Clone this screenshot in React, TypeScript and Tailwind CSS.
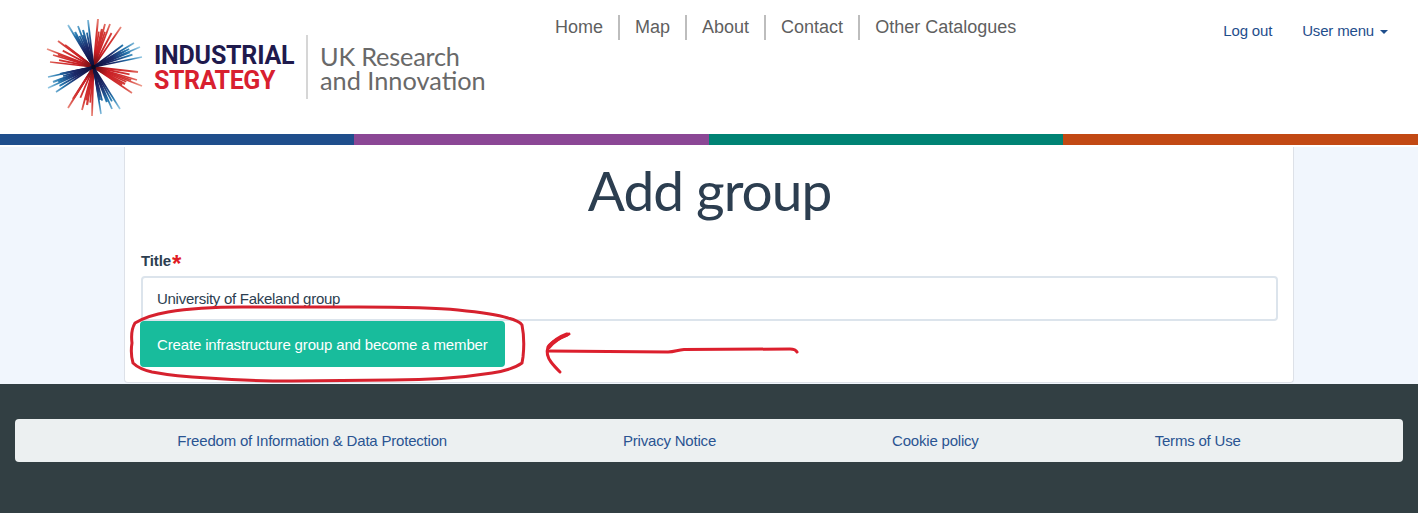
const sans = { fontFamily: '"Liberation Sans", Arial, sans-serif' };

type Ray = [number, number, number];
// sectors of the burst: tips in px relative to the burst box; third value = stroke width
const blue: Ray[][] = [
  [[28, 13, 1.8], [35, 20, 2.2], [38, 14, 1.8], [43, 18, 2], [48, 8, 1.8]],
  [[83, 33, 1.8], [90, 40, 2.2], [94, 31, 1.6], [100, 35, 1.6], [102, 45, 1.6]],
  [[80, 97, 1.6], [72, 97, 1.8], [67, 90, 2.2], [61, 102, 1.6], [60, 88, 2]],
  [[8, 65, 1.6], [20, 62, 2.2], [13, 70, 2.2], [8, 76, 1.6], [16, 80, 1.6]],
];
const red: Ray[][] = [
  [[58, 7, 2], [62, 17, 2.2], [65, 12, 1.8], [70, 12, 1.8], [81, 15, 1.8]],
  [[98, 60, 1.8], [97, 68, 1.8], [102, 74, 1.6], [85, 72, 2.2], [92, 81, 1.6]],
  [[28, 96, 1.8], [33, 87, 2.2], [42, 98, 1.8], [47, 93, 2.2], [52, 104, 1.8]],
  [[18, 29, 1.8], [25, 33, 2.2], [7, 37, 1.6], [13, 43, 1.8], [10, 50, 1.6]],
];

function Burst() {
  const cx = 53.5;
  const cy = 55;
  const draw = (groups: Ray[][], grad: string, prefix: string) =>
    groups.flatMap((g, k) =>
      g.flatMap(([x, y, w], i) => {
        const out = [
          <line key={`${prefix}${k}-${i}`} x1={cx} y1={cy} x2={x} y2={y} stroke={grad} strokeWidth={w} />,
        ];
        const n = g[i + 1];
        if (n) {
          const mx = cx + ((x + n[0]) / 2 - cx) * 0.82;
          const my = cy + ((y + n[1]) / 2 - cy) * 0.82;
          out.push(
            <line key={`${prefix}${k}-${i}m`} x1={cx} y1={cy} x2={mx} y2={my} stroke={grad} strokeWidth={1.8} />,
          );
        }
        return out;
      }),
    );
  return (
    <svg width="110" height="110" viewBox="0 0 110 110" className="shrink-0">
      <defs>
        <radialGradient id="rb" gradientUnits="userSpaceOnUse" cx={cx} cy={cy} r="52">
          <stop offset="0" stopColor="#0d0b35" />
          <stop offset="0.4" stopColor="#1b2a6b" />
          <stop offset="0.7" stopColor="#2476ad" />
          <stop offset="1" stopColor="#a9d8ee" />
        </radialGradient>
        <radialGradient id="rr" gradientUnits="userSpaceOnUse" cx={cx} cy={cy} r="52">
          <stop offset="0" stopColor="#5a0b10" />
          <stop offset="0.3" stopColor="#c81e24" />
          <stop offset="0.7" stopColor="#d43a36" />
          <stop offset="1" stopColor="#eea090" />
        </radialGradient>
      </defs>
      {draw(red, 'url(#rr)', 'r')}
      {draw(blue, 'url(#rb)', 'b')}
      <circle cx={cx} cy={cy} r="2.2" fill="#0a0a20" />
    </svg>
  );
}

function Logo() {
  return (
    <div className="w-[540px] shrink-0 flex items-start pt-[12px] pl-[40px]">
      <Burst />
      <div
        className="ml-[4px] mt-[31px] flex flex-col font-bold text-[25px] leading-[25px] w-[150px]"
        style={{ fontFamily: 'Roboto, sans-serif' }}
      >
        <span className="text-[#1f1a4d] tracking-[-0.2px]">INDUSTRIAL</span>
        <span className="text-[#d8202f] tracking-[-0.4px]">STRATEGY</span>
      </div>
      <div className="mt-[23px] h-[64px] w-[2px] bg-[#d6d6d6] ml-[2px]" />
      <div
        className="ml-[12px] mt-[32px] flex flex-col text-[25.3px] leading-[24px] text-[#696969] whitespace-nowrap"
        style={{ fontFamily: 'Lato, sans-serif' }}
      >
        <span className="tracking-[-0.2px]">UK Research</span>
        <span>and Innovation</span>
      </div>
    </div>
  );
}

function Nav() {
  const items = ['Home', 'Map', 'About', 'Contact', 'Other Catalogues'];
  return (
    <nav className="flex pt-[15px] text-[18px] leading-[25px] text-[#5f5f5f]">
      {items.map((t, i) => (
        <a
          key={t}
          className={`px-[15px] h-[25px] block whitespace-nowrap ${i < items.length - 1 ? 'border-r-2 border-[#bdbdbd]' : ''}`}
        >
          {t}
        </a>
      ))}
    </nav>
  );
}

function UserMenu() {
  return (
    <div className="ml-auto mr-[30px] flex items-center gap-[30px] h-[21px] mt-[21px] text-[15px] tracking-[-0.17px] text-[#1f4e8c]">
      <a>Log out</a>
      <a className="flex items-center gap-[6px]">
        User menu
        <span className="w-0 h-0 border-x-[4px] border-x-transparent border-t-[4px] border-t-[#1f4e8c]" />
      </a>
    </div>
  );
}

function Annotation() {
  return (
    <svg width="1418" height="513" viewBox="0 0 1418 513" className="absolute left-0 top-0 pointer-events-none" fill="none">
      <path
        d="M135 323 C145 317 156 314 168 312 C192 308 220 307 242 307 L358 307 C395 307 430 307 458 310 C478 312 495 314 508 318 C516 320 520 322 522 325 C524 335 524 348 523 357 L522 363 C515 368 505 371 492 373 C460 378 425 380 392 380 L292 381 C262 381 235 380 208 378 C188 377 168 375 152 372 C143 370 137 367 133 363 C131 356 131 349 132 343 C131 335 132 328 135 323 Z"
        stroke="#d6212e"
        strokeWidth="3"
      />
      <path d="M569 334 C560 338 551 342 548 347 C546 353 548 358 551 362 C554 366 557 369 560 372" stroke="#dc1f2d" strokeWidth="3" strokeLinecap="round" />
      <path d="M567 334.5 C560 337 553 342 549 347" stroke="#dc1f2d" strokeWidth="4" strokeLinecap="round" />
      <path d="M548 351 L668 352 C675 352 677 350 684 349.5 L790 349 C794 349 796 350 797 352" stroke="#dc1f2d" strokeWidth="3" strokeLinecap="round" />
    </svg>
  );
}

export default function App() {
  return (
    <div className="relative w-[1418px] h-[513px] overflow-hidden bg-white flex flex-col" style={sans}>
      <header className="h-[134px] flex shrink-0 bg-white">
        <Logo />
        <Nav />
        <UserMenu />
      </header>
      <div className="flex h-[11px] shrink-0">
        <div className="w-[354px] bg-[#1f4e8c]" />
        <div className="w-[355px] bg-[#8b4795]" />
        <div className="w-[354px] bg-[#008374]" />
        <div className="flex-1 bg-[#c24914]" />
      </div>
      <main className="h-[239px] shrink-0 bg-[#f1f6fd] border-t-2 border-white flex justify-center">
        <section className="w-[1170px] h-[236px] bg-white border-x border-b border-[#dde1e8] rounded-b-[4px] pl-[16px] pr-[15px]">
          <h1
            className="text-center text-[55px] tracking-[-1px] leading-[62px] mt-[12px] text-[#2c3e50]"
            style={{ fontFamily: 'Lato, sans-serif' }}
          >
            Add group
          </h1>
          <div className="mt-[32px] h-[16px] flex items-center text-[15px] font-bold tracking-[-0.1px] text-[#2c3e50]">
            Title<span className="text-[#e01b24] text-[24px] leading-[16px] font-bold pt-[6px] ml-px">*</span>
          </div>
          <input
            readOnly
            value="University of Fakeland group"
            className="block mt-[7px] w-full h-[45px] border-2 border-[#dce4ec] rounded-[4px] px-[14px] text-[15px] tracking-[-0.28px] text-[#2c3e50] bg-white outline-none"
            style={sans}
          />
          <button className="block -ml-px h-[46px] px-[17px] pt-[2px] bg-[#18bc9c] text-white text-[15px] tracking-[-0.15px] rounded-[4px] whitespace-nowrap">
            Create infrastructure group and become a member
          </button>
        </section>
      </main>
      <footer className="flex-1 bg-[#323f43] px-[15px] pt-[35px]">
        <div className="h-[43px] pt-[2px] bg-[#ecf0f1] rounded-[4px] flex items-center justify-center gap-[176px] text-[15px] tracking-[-0.2px] text-[#2a5492]">
          <a>Freedom of Information &amp; Data Protection</a>
          <a>Privacy Notice</a>
          <a>Cookie policy</a>
          <a>Terms of Use</a>
        </div>
      </footer>
      <Annotation />
    </div>
  );
}
